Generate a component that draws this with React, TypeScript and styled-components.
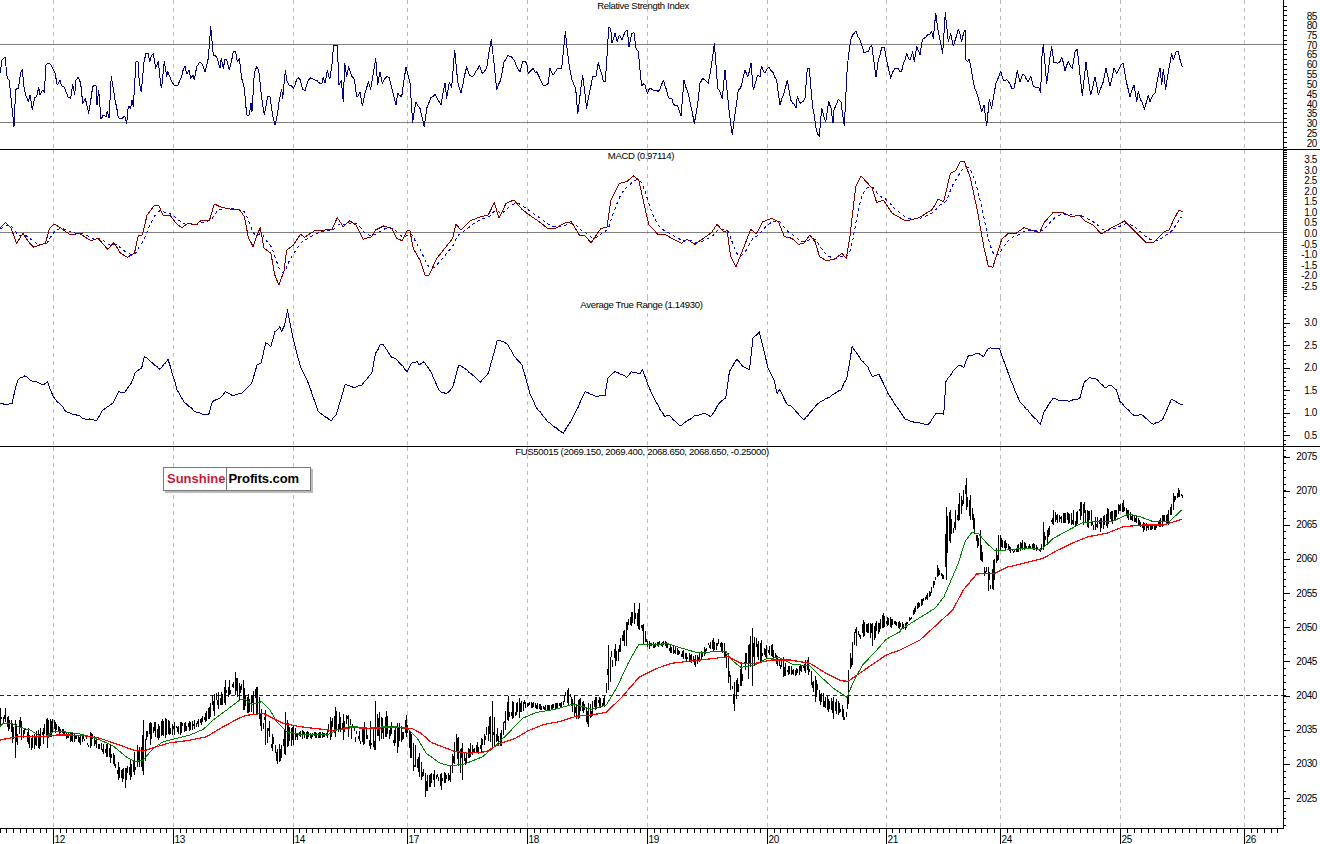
import React from 'react';
import styled, { createGlobalStyle } from 'styled-components';

type Pt = [number, number];

const trace = (x0: number, y0: number, sx: number, sy: number, raw: number[]): Pt[] => {
  const out: Pt[] = [];
  for (let i = 0; i < raw.length; i += 2) out.push([x0 + raw[i] * sx, y0 + raw[i + 1] * sy]);
  return out;
};
const toPoints = (p: Pt[]) => p.map(([x, y]) => `${x.toFixed(1)},${y.toFixed(1)}`).join(' ');

const makeRandom = (start: number) => {
  let seed = start;
  return () => {
    seed = (seed * 1664525 + 1013904223) >>> 0;
    return seed / 4294967296;
  };
};

const roughen = (line: Pt[], amp: number, every: number, start: number): Pt[] => {
  const rnd = makeRandom(start);
  const out: Pt[] = [];
  for (let i = 0; i < line.length - 1; i += 1) {
    const [ax, ay] = line[i];
    const [bx, by] = line[i + 1];
    out.push([ax, ay]);
    const n = Math.floor((bx - ax) / every);
    for (let k = 1; k < n; k += 1) {
      const t = k / n;
      out.push([ax + (bx - ax) * t, ay + (by - ay) * t + (rnd() - 0.5) * amp]);
    }
  }
  out.push(line[line.length - 1]);
  return out;
};

const Z9 = 620 / 1568;
const Z10 = 700 / 1568;
const Z11 = 570 / 1568;
const T = 1 / 3;

const rsi: Pt[] = roughen([
  ...trace(0, 0, T, T, [0,220,6,180,15,172,22,235,28,240,33,295,42,380,47,268,55,265,62,218,67,208,72,262,77,285,85,305,90,285,97,328,104,292,110,290,116,262,120,285,128,270,133,278,138,195,148,190,158,205,165,220,172,255,180,240,185,258,193,262,205,292,212,295,218,252,224,285,228,240,235,232,242,250,248,310,256,295,266,340,278,260,288,258,291,315,296,270,303,358,310,345,318,350,322,333,327,355,334,228,345,300,355,352,365,356,374,348,380,370,385,318,392,325,396,300,400,320,408,185,414,185,418,250,424,275,432,185,438,160,445,160,449,185,460,160,467,205,475,183,482,255,485,262,493,185,500,230,503,215,510,232,522,255,533,258,540,240,555,197,560,222,567,210,572,235,580,225,583,240,590,200,600,185,610,200,615,215,625,175,632,80,640,165,650,170,660,205,664,175,670,205,675,178,680,178,688,210,700,155,707,155,712,185,718,175,725,235,733,265,740,345,748,345,753,310,756,335,763,220,770,200,776,210,785,295,793,345,803,288,810,290,820,355,825,375,832,345,838,300,845,268,848,295,856,212,860,240,868,258,880,265,890,238,900,238,908,268,915,272,925,240,938,236,950,240,965,252,970,232,975,250,982,212,988,235]),
  ...trace(330, 0, T, T, [0,235,8,178,10,138,22,135,27,255,34,240,40,305,44,190,50,230,56,200,65,228,73,238,80,290,90,275,97,318,105,280,115,245,122,268,128,230,137,175,143,255,150,215,157,250,165,235,178,233,185,262,198,316,203,280,215,290,228,200,240,250,248,368,258,305,270,325,283,380,290,325,303,292,316,283,333,315,345,250,350,295,358,248,365,262,374,150,383,245,393,278,410,200,418,225,433,225,448,195,457,220,470,205,484,118,492,190,500,270,512,240,522,185,533,165,548,175,555,185,570,215,578,185,590,190,595,220,610,205,625,225,638,255,655,250,660,205,668,225,683,205,695,205,706,95,718,200,726,240,737,265,743,342,758,225,770,325,775,295,788,230,798,228,805,188,820,245,826,245,832,155,836,82,842,85,846,130,855,100,862,125,868,105,876,120,885,95,892,90,897,142,905,100,912,98,918,145,925,155,935,258,945,255,952,280,962,265,975,270,985,275,1000,240,1015,290,1025,295,1030,312,1042,315,1053,348,1062,240,1075,280,1093,370,1103,310,1110,250,1118,235,1135,250,1143,205,1153,130,1163,265,1177,295,1185,210,1197,330,1207,405,1213,355,1225,270,1235,255,1245,210,1253,230,1263,190,1270,270,1283,225,1290,230]),
  ...trace(760, 0, T, T, [0,220,5,200,15,218,27,200,50,240,60,315,72,280,82,240,92,300,108,325,112,288,120,310,135,295,142,205,148,205,158,320,168,385,178,410,185,325,197,365,206,305,213,325,219,370,222,330,235,298,243,305,253,378,262,200,272,120,288,92,305,135,312,158,325,155,335,135,348,232,355,180,365,142,373,142,392,235,404,205,425,213,440,160,450,180,458,155,463,185,470,140,480,165,487,120,502,105,515,95,520,115,527,40,535,95,548,160,556,38,565,125,572,100,580,138,595,88,605,125,615,90,618,180,628,178,640,245,655,295,665,335,672,315,680,378,688,298,695,325,708,250,722,213,730,240,745,245,755,265,762,265,772,212,780,245,788,222,805,245,812,228,820,258,838,265,842,278,845,175,850,133,860,250,875,140,882,188,900,185,905,172,915,212,925,185,937,205,945,155,952,148,967,288,978,185,992,285,1005,230,1015,285,1030,245,1038,205,1050,258,1062,205,1070,220,1083,195,1090,190,1100,250,1110,290,1122,255,1130,305,1135,275,1142,300,1153,328,1165,285,1170,305,1185,280,1200,205,1205,255,1210,208,1217,268,1225,215,1235,160,1240,180,1248,155,1255,155,1267,202]),
], 3.5, 1.6, 77);

const macd: Pt[] = [
  ...trace(0, 150, Z9, T, [0,235,14,217,28,235,42,280,58,250,72,275,85,292,100,285,115,280,125,235,137,222,155,235,178,255,200,250,230,272,248,265,272,298,288,278,305,310,322,322,340,310,350,255,360,255,372,195,390,167,402,168,412,195,430,195,445,220,460,233,475,220,495,225,510,210,530,210,542,162,560,172,585,178,605,178,618,200,628,262,640,290,652,250,658,233,668,295,685,310,695,375,705,405,718,365,725,300,742,285,760,253,770,262,795,243,840,238,853,203,868,230,885,212,900,225,918,268,940,260,950,240,970,228,990,235,1003,265,1017,272,1030,242,1037,243,1045,295,1062,330,1075,375,1085,375,1105,325,1125,295,1145,265,1153,222,1165,240,1190,212,1215,200,1235,195,1250,158,1262,205,1280,160,1300,150,1320,178,1335,192,1360,212,1385,235,1405,235,1430,218,1445,215,1465,255,1480,258,1495,278,1520,235,1535,232,1545,150,1565,103]),
  ...trace(620, 150, Z10, T, [0,100,15,95,30,78,42,90,55,170,65,225,85,253,100,253,120,268,138,280,150,268,168,283,190,262,205,248,217,223,232,245,240,242,248,320,260,350,272,310,293,238,305,252,320,215,340,205,355,215,368,260,385,265,400,283,412,280,425,255,437,275,447,320,462,332,480,328,497,310,507,325,515,260,528,110,540,78,565,115,575,158,590,150,610,190,640,213,670,203,700,178,712,148,725,155,740,70,752,62,762,35,772,35,785,85,800,178,815,290,825,348,835,352,855,268,870,250,885,252,905,233,940,248,950,218,970,188,992,188,1012,200,1030,195,1040,212,1060,225,1078,252,1095,238,1130,213,1150,240,1178,277,1195,277,1220,245,1230,240,1240,210,1252,180,1260,185]),
];

const lag = (line: Pt[], alpha: number): Pt[] => {
  const out: Pt[] = [];
  let seg = 0;
  let ema = line[0][1];
  for (let x = Math.ceil(line[0][0]); x <= line[line.length - 1][0]; x += 1) {
    while (seg < line.length - 2 && line[seg + 1][0] < x) seg += 1;
    const [ax, ay] = line[seg];
    const [bx, by] = line[seg + 1];
    const y = ay + ((by - ay) * (x - ax)) / Math.max(bx - ax, 0.01);
    ema += (y - ema) * alpha;
    out.push([x, ema]);
  }
  return out;
};
const signal = lag(macd, 0.14);

const atr: Pt[] = roughen([
  ...trace(0, 150, Z9, T, [0,760,15,765,30,762,38,720,45,690,62,678,80,692,110,705,120,695,135,740,170,787,190,793,220,808,245,810,258,782,285,760,300,725,315,728,332,700,342,668,358,655,365,620,385,638,403,658,425,628,448,720,465,755,490,782,515,793,528,793,537,755,555,745,570,725,590,738,612,730,637,698,650,645,660,640,672,578,685,590,695,545,708,530,712,545,720,525,727,480,743,575,760,650,780,700,805,785,838,812,850,795,860,755,873,702,893,712,915,705,940,670,950,610,962,583,970,585,990,622,1003,628,1030,665,1040,640,1055,635,1060,645,1072,635,1090,665,1110,720,1128,732,1145,712,1160,645,1175,655,1215,697,1235,670,1258,570,1283,582,1300,617,1320,645,1340,730,1355,770,1385,815,1425,850,1450,800,1480,725,1505,738,1530,738,1537,685,1555,665]),
  ...trace(620, 150, Z10, T, [0,672,15,682,25,665,45,672,50,658,60,695,80,755,100,800,110,796,135,828,170,795,190,790,203,800,222,760,237,743,245,665,262,628,275,650,290,658,298,565,312,545,332,655,345,690,352,730,358,718,375,765,385,770,412,810,440,765,455,752,475,735,495,720,508,685,520,590,540,630,555,650,565,680,580,672,590,700,600,730,620,770,640,810,690,825,708,790,725,793,730,695,745,665,760,645,770,652,780,618,800,610,815,620,825,595,850,595,875,690,895,755,942,822,950,785,970,745,985,752,1010,752,1030,745,1040,695,1052,682,1070,690,1085,712,1100,706,1112,720,1120,755,1150,795,1170,795,1195,823,1215,810,1235,748,1260,764]),
], 1.4, 2, 31);

const greenMa: Pt[] = [
  ...trace(0, 670, T, T, [0,170,10,160,35,160,60,172,90,180,120,198,135,200,160,185,190,185,240,192,270,200,300,210,340,228,380,262,405,275,430,270,460,235,490,215,520,208,570,195,610,178,640,150,680,120,720,90,735,88,755,103,785,95,810,120,830,155,860,185,900,193,985,193]),
  ...trace(330, 590, Z11, T, [0,430,20,420,60,408,100,415,170,408,215,418,240,445,265,490,300,518,330,528,370,522,420,500,460,462,490,430,530,385,565,368,620,358,670,342,720,358,760,345,790,290,820,220,850,162,900,165,925,160,960,172,1010,188,1060,185,1090,185,1105,210,1130,232,1170,225,1200,207,1235,202,1270,222,1320,228,1345,255,1385,295,1422,322,1440,275,1465,225,1500,185,1530,148,1568,125]),
  ...trace(880, 460, T, T, [60,510,165,445,192,410,235,310,255,245,275,218,295,220,320,250,345,272,380,270,430,265,485,268,520,235,570,208,610,187,660,185,700,183,745,162,780,170,820,185,870,183,905,150]),
];

const redMa: Pt[] = [
  ...trace(0, 670, T, T, [0,210,50,200,100,200,130,200,170,195,210,195,260,198,300,205,350,222,400,240,430,243,470,230,510,218,560,212,620,200,670,170,720,143,740,136,790,130,820,145,850,160,900,170,985,180]),
  ...trace(330, 590, Z11, T, [0,422,60,413,120,415,170,412,225,415,250,430,280,458,340,483,380,490,430,485,465,462,510,445,545,422,590,403,630,395,680,378,720,375,760,367,800,325,850,262,900,235,940,220,1000,212,1060,205,1095,200,1130,220,1170,220,1215,210,1265,210,1320,220,1365,250,1405,272,1425,274,1450,255,1490,225,1530,195,1568,180]),
  ...trace(880, 460, T, T, [120,540,218,450,250,390,290,342,345,340,380,322,430,310,490,295,530,272,580,248,625,230,680,220,730,200,790,195,850,195,905,178]),
];

type Env = [number, number, number];
const envTriples = (x0: number, y0: number, sx: number, sy: number, raw: number[]): Env[] => {
  const out: Env[] = [];
  for (let i = 0; i < raw.length; i += 3) out.push([x0 + raw[i] * sx, y0 + raw[i + 1] * sy, y0 + raw[i + 2] * sy]);
  return out;
};

const envelope: Env[] = [
  ...envTriples(0, 0, 1, 1, [0,708,727,5,708,722,15,720,758,22,716,745,33,730,753,47,718,748,53,718,735,60,728,735,70,732,742,80,735,745,90,732,748,100,737,752,110,745,763,118,762,780,125,768,788,130,760,780,136,740,775,143,720,775,150,722,745,165,718,738,180,722,735,195,718,730,205,713,722,215,685,720,225,680,705,235,672,695,243,680,710,250,695,720,258,678,720,265,710,745,270,722,750,278,745,788,285,712,755,293,725,745,305,730,740,325,732,738]),
  ...envTriples(330, 590, Z11, T, [0,380,450,15,350,440,40,345,465,75,415,470,125,330,480,155,365,440,185,400,490,210,375,440,225,420,555,245,490,560,262,550,625,285,540,590,305,550,600,330,525,575,345,420,540,362,460,575,385,460,500,415,445,490,445,330,470,465,430,500,490,315,390,520,325,385,540,330,355,600,345,362,640,335,350,648,278,340,670,315,380,690,320,400,710,340,410,735,310,360,755,320,350,765,160,300,790,150,230,815,95,165,835,40,100,850,40,120,860,100,160,875,150,180,920,150,170,935,165,190,970,180,205,1005,195,232,1030,170,195,1060,130,190,1085,160,200,1095,190,280,1110,280,370,1125,220,300,1160,112,290,1185,150,215,1215,160,200,1245,200,260,1280,235,258,1315,200,255,1335,260,340,1355,310,350,1385,320,390,1405,330,370,1418,365,420,1425,240,340,1440,100,190,1465,90,140,1490,100,170,1520,68,115,1560,90,115]),
  ...envTriples(0, 0, 1, 1, [905,622,630,916,604,610,922,598,606,930,590,598,937,565,577,943,575,580,946,507,580,950,510,543,955,510,530,959,493,520,966,478,510,970,495,520,975,520,540,980,530,560,983,555,578,987,565,597,993,560,590,998,535,560,1000,535,550,1005,540,550,1013,548,555,1022,540,550,1033,543,550,1040,548,552,1043,522,550,1047,530,545,1053,510,525,1062,512,527,1073,510,525,1082,500,530,1090,505,530,1100,518,532,1107,508,528,1113,508,525,1123,500,512,1128,510,520,1137,515,525,1143,522,532,1155,525,530,1162,515,527,1168,510,525,1173,493,510,1178,488,497,1183,495,500]),
];

const buildBars = (): string => {
  const rnd = makeRandom(20150625);
  let seg = 0;
  let walk = 0.5;
  const parts: string[] = [];
  const forced = new Set(envelope.map((e) => Math.round(e[0])));
  for (let i = 0; i * 1.34 <= 1183; i += 1) {
    const x = Math.round(i * 1.34);
    while (seg < envelope.length - 2 && envelope[seg + 1][0] < x) seg += 1;
    const a = envelope[seg];
    const b = envelope[seg + 1];
    const t = Math.min(1, Math.max(0, (x - a[0]) / Math.max(b[0] - a[0], 0.01)));
    const hi = a[1] + (b[1] - a[1]) * t;
    const lo = a[2] + (b[2] - a[2]) * t;
    const spread = lo - hi;
    walk = Math.min(1, Math.max(0, walk * 0.35 + 0.65 * rnd() + (rnd() - 0.5) * 0.3));
    const isKey = forced.has(x) && spread > 8;
    const len = isKey ? spread : Math.min(spread, 2 + rnd() * spread * 0.7);
    const top = isKey ? hi : hi + (spread - len) * walk;
    parts.push(`M${x + 0.5} ${Math.round(top)}V${Math.round(top + len)}`);
  }
  return parts.join('');
};
const barsPath = buildBars();

const GRID = [53, 173, 293, 407, 527, 647, 767, 886, 1000, 1120, 1244];
const DAYS = ['12', '13', '14', '17', '18', '19', '20', '21', '24', '25', '26'];

const buildTimeTicks = (): number[] => {
  const out: number[] = [];
  for (let x = 53 - 6.67 * 8; x < 53; x += 6.67) out.push(x);
  for (let i = 0; i < GRID.length - 1; i += 1) {
    const step = (GRID[i + 1] - GRID[i]) / 18;
    for (let k = 1; k < 18; k += 1) out.push(GRID[i] + step * k);
  }
  for (let x = 1244 + 6.67; x < 1283; x += 6.67) out.push(x);
  return out;
};

const range = (from: number, to: number, step: number): number[] => {
  const out: number[] = [];
  for (let v = from; v < to; v += step) out.push(v);
  return out;
};

const rsiLabels: [string, number][] = [['85', 16], ['80', 25.5], ['75', 35.5], ['70', 45], ['65', 54.5], ['60', 64.5], ['55', 74.5], ['50', 84.5], ['45', 94.5], ['40', 104], ['35', 113.5], ['30', 123], ['25', 133.5], ['20', 143.5]];
const macdLabels: [string, number][] = [['3.5', 159.5], ['3.0', 170], ['2.5', 180.5], ['2.0', 191], ['1.5', 201.5], ['1.0', 212], ['0.5', 222.5], ['0.0', 233], ['-0.5', 244], ['-1.0', 254], ['-1.5', 265], ['-2.0', 275.5], ['-2.5', 286]];
const atrLabels: [string, number][] = [['3.0', 322.5], ['2.5', 345], ['2.0', 367.5], ['1.5', 390], ['1.0', 412.5], ['0.5', 435]];
const priceLabels: [string, number][] = ['2075', '2070', '2065', '2060', '2055', '2050', '2045', '2040', '2035', '2030', '2025'].map((s, i) => [s, 456.5 + i * 34.15]);

const Global = createGlobalStyle`
  html, body { margin: 0; padding: 0; background: #fff; overflow: hidden; }
  body { font-family: "Liberation Sans", Arial, sans-serif; }
`;

const Page = styled.main`
  width: 1320px;
  height: 844px;
  display: flex;
  flex-direction: column;
  background: #fff;
`;

const Panel = styled.section<{ $height: number; $rule?: boolean }>`
  position: relative;
  flex: 0 0 ${(p) => p.$height}px;
  display: flex;
  box-sizing: border-box;
  border-bottom: ${(p) => (p.$rule ? '1px solid #000' : 'none')};
`;

const Plot = styled.svg`
  flex: 0 0 1283px;
  height: 100%;
  display: block;
  shape-rendering: crispEdges;
`;

const Scale = styled.svg`
  flex: 0 0 37px;
  height: 100%;
  display: block;
  shape-rendering: crispEdges;
`;

const ScaleLabel = styled.text`
  font-family: "Liberation Sans", Arial, sans-serif;
  font-size: 10px;
  letter-spacing: -0.4px;
  fill: #000;
  text-anchor: end;
`;

const Title = styled.h2<{ $center: number; $top: number }>`
  position: absolute;
  left: ${(p) => p.$center}px;
  top: ${(p) => p.$top}px;
  transform: translateX(-50%);
  margin: 0;
  font-size: 9.6px;
  font-weight: 400;
  letter-spacing: -0.35px;
  line-height: 12px;
  white-space: nowrap;
  color: #000;
`;

const GridLine = styled.line`
  stroke: #bdbdbd;
  stroke-width: 1;
  stroke-dasharray: 4 4;
`;

const Level = styled.line`
  stroke: #808080;
  stroke-width: 1;
`;

const DashLevel = styled.line`
  stroke: #800000;
  stroke-width: 1;
  stroke-dasharray: 4 3;
`;

const Series = styled.polyline<{ $color: string; $width?: number; $dash?: string }>`
  fill: none;
  stroke: ${(p) => p.$color};
  stroke-width: ${(p) => p.$width ?? 1};
  stroke-dasharray: ${(p) => p.$dash ?? 'none'};
  stroke-linejoin: round;
`;

const Bars = styled.path`
  fill: none;
  stroke: #000;
  stroke-width: 1;
`;

const Tick = styled.line`
  stroke: #000;
  stroke-width: 1;
`;

const TimeAxis = styled.svg`
  flex: 0 0 16px;
  width: 1320px;
  display: block;
  shape-rendering: crispEdges;
`;

const DayLabel = styled.text`
  font-family: "Liberation Sans", Arial, sans-serif;
  font-size: 10px;
  letter-spacing: -0.4px;
  fill: #000;
`;

const Logo = styled.div`
  position: absolute;
  left: 163px;
  top: 20px;
  width: 148px;
  height: 24px;
  display: flex;
  box-sizing: border-box;
  border: 1px solid #777;
  background: #fff;
  box-shadow: 2px 2px 0 #bbb;
  font-size: 13px;
  font-weight: 700;
  line-height: 22px;
`;

const LogoLead = styled.span`
  flex: 0 0 62px;
  box-sizing: border-box;
  padding-left: 3px;
  color: #c8193c;
  border-right: 1px solid #777;
  white-space: nowrap;
`;

const LogoTail = styled.span`
  flex: 1;
  padding-left: 2px;
  color: #000;
  letter-spacing: -0.1px;
  white-space: nowrap;
`;

const Grid = ({ top, bottom }: { top: number; bottom: number }) => (
  <>
    {GRID.map((x) => (
      <GridLine key={x} x1={x + 0.5} x2={x + 0.5} y1={top} y2={bottom} />
    ))}
  </>
);

const Axis = ({
  top,
  height,
  ticks,
  majors,
  labels,
  tickLen = 4,
}: {
  top: number;
  height: number;
  ticks: number[];
  majors?: number[];
  labels: [string, number][];
  tickLen?: number;
}) => (
  <Scale viewBox={`1283 ${top} 37 ${height}`}>
    <Tick x1={1283.5} x2={1283.5} y1={top} y2={top + height} />
    {ticks.map((y) => (
      <Tick key={`t${y}`} x1={1283} x2={1283 + tickLen} y1={Math.round(y) + 0.5} y2={Math.round(y) + 0.5} />
    ))}
    {(majors ?? []).map((y) => (
      <Tick key={`m${y}`} x1={1283} x2={1290} y1={Math.round(y) + 0.5} y2={Math.round(y) + 0.5} />
    ))}
    {labels.map(([text, y]) => (
      <ScaleLabel key={text} x={1317} y={y + 3.5}>
        {text}
      </ScaleLabel>
    ))}
  </Scale>
);

export default function App() {
  const timeTicks = buildTimeTicks();
  return (
    <Page>
      <Global />
      <Panel $height={150} $rule>
        <Plot viewBox="0 0 1283 149">
          <Grid top={0} bottom={149} />
          <Level x1={0} x2={1283} y1={44.5} y2={44.5} />
          <Level x1={0} x2={1283} y1={122.5} y2={122.5} />
          <Series $color="#000080" points={toPoints(rsi)} />
        </Plot>
        <Axis top={0} height={149} ticks={range(5.5, 149, 4.87)} labels={rsiLabels} />
        <Title $center={643} $top={0}>Relative Strength Index</Title>
      </Panel>
      <Panel $height={147}>
        <Plot viewBox="0 150 1283 147">
          <Grid top={150} bottom={297} />
          <Level x1={0} x2={1283} y1={232.5} y2={232.5} />
          <Series $color="#0000ff" $dash="3 3" points={toPoints(signal)} />
          <Series $color="#800000" points={toPoints(macd)} />
        </Plot>
        <Axis top={150} height={147} ticks={range(150, 297, 2.11)} labels={macdLabels} />
        <Title $center={641} $top={0}>MACD (0.97114)</Title>
      </Panel>
      <Panel $height={150} $rule>
        <Plot viewBox="0 297 1283 149">
          <Grid top={297} bottom={446} />
          <Series $color="#000080" points={toPoints(atr)} />
        </Plot>
        <Axis
          top={297}
          height={149}
          ticks={range(300, 446, 4.5)}
          majors={atrLabels.map((l) => l[1])}
          labels={atrLabels}
          tickLen={3}
        />
        <Title $center={641.5} $top={2}>Average True Range (1.14930)</Title>
      </Panel>
      <Panel $height={381}>
        <Plot viewBox="0 447 1283 381">
          <Grid top={447} bottom={828} />
          <DashLevel x1={0} x2={1283} y1={695.5} y2={695.5} />
          <Bars d={barsPath} />
          <Series $color="#008000" points={toPoints(greenMa)} />
          <Series $color="#ff0000" $width={1.2} points={toPoints(redMa)} />
        </Plot>
        <Axis
          top={447}
          height={381}
          ticks={range(449.5, 828, 6.83)}
          majors={priceLabels.map((l) => l[1])}
          labels={priceLabels}
          tickLen={3}
        />
        <Title $center={642} $top={-1}>FUS50015 (2069.150, 2069.400, 2068.650, 2068.650, -0.25000)</Title>
        <Logo>
          <LogoLead>Sunshine</LogoLead>
          <LogoTail>Profits.com</LogoTail>
        </Logo>
      </Panel>
      <TimeAxis viewBox="0 828 1320 16">
        <Tick x1={0} x2={1284} y1={828.5} y2={828.5} />
        {timeTicks.map((x) => (
          <Tick key={x} x1={Math.round(x) + 0.5} x2={Math.round(x) + 0.5} y1={829} y2={833} />
        ))}
        {GRID.map((x, i) => (
          <React.Fragment key={x}>
            <Tick x1={x + 0.5} x2={x + 0.5} y1={829} y2={844} />
            <DayLabel x={x + 1.5} y={843}>
              {DAYS[i]}
            </DayLabel>
          </React.Fragment>
        ))}
      </TimeAxis>
    </Page>
  );
}
